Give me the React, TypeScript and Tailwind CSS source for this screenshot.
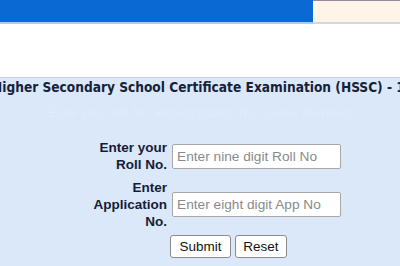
import React from "react";

export default function App() {
  const sans = { fontFamily: '"Liberation Sans", Arial, sans-serif' };
  return (
    <div className="w-[400px] h-[266px] overflow-hidden bg-white flex flex-col">
      <div className="flex h-[24px] shrink-0">
        <div className="flex-1 bg-[#0a69d2] border-b-2 border-[#a9cdf0]"></div>
        <div className="w-[87px] bg-[#fef5e8] border-t border-[#8f8ca6] border-b-2 border-b-[#d3d8dd]"></div>
      </div>
      <div className="h-[53px] shrink-0 bg-white"></div>
      <div className="flex-1 bg-[#dbe8f9] border-t border-[#c9cde6] flex flex-col overflow-hidden">
        <div className="h-[19px] whitespace-nowrap ml-[-8px] text-[13.6px] leading-[19px] font-bold text-[#152238]" style={{ fontFamily: '"DejaVu Sans Condensed", "DejaVu Sans", sans-serif' }}>
          Higher Secondary School Certificate Examination (HSSC) - 11th Class Result
        </div>
        <div className="mt-[8px] h-[16px] text-center text-[12px] leading-[16px] text-[#e1ebf9]" style={sans}>
          Enter your Roll No. and Application No. to view the result
        </div>
        <div className="mt-[18px] flex flex-col gap-[6px] pl-[77px]" style={sans}>
          <div className="flex items-center gap-[5px]">
            <div className="w-[90px] text-right font-bold text-[13.5px] leading-[17px] text-[#151c38]">
              Enter your
              <br />
              Roll No.
            </div>
            <input
              className="w-[169px] h-[25px] bg-white border border-[#a8a8a8] rounded-[2px] px-[4px] text-[13.7px] text-[#333] placeholder:text-[#8a8a8a] outline-none"
              style={sans}
              placeholder="Enter nine digit Roll No"
            />
          </div>
          <div className="flex items-center gap-[5px]">
            <div className="w-[90px] text-right font-bold text-[13.5px] leading-[17px] text-[#151c38]">
              Enter
              <br />
              Application
              <br />
              No.
            </div>
            <input
              className="w-[169px] h-[25px] bg-white border border-[#a8a8a8] rounded-[2px] px-[4px] text-[13.7px] text-[#333] placeholder:text-[#8a8a8a] outline-none"
              style={sans}
              placeholder="Enter eight digit App No"
            />
          </div>
          <div className="flex gap-[4px] pl-[93px] -mt-[1px]">
            <button className="w-[61px] h-[23px] bg-white border border-[#8c8c8c] rounded-[3px] text-[13.5px] leading-[20px] text-[#111]" style={sans}>
              Submit
            </button>
            <button className="w-[52px] h-[23px] bg-white border border-[#8c8c8c] rounded-[3px] text-[13.5px] leading-[20px] text-[#111]" style={sans}>
              Reset
            </button>
          </div>
        </div>
      </div>
    </div>
  );
}
